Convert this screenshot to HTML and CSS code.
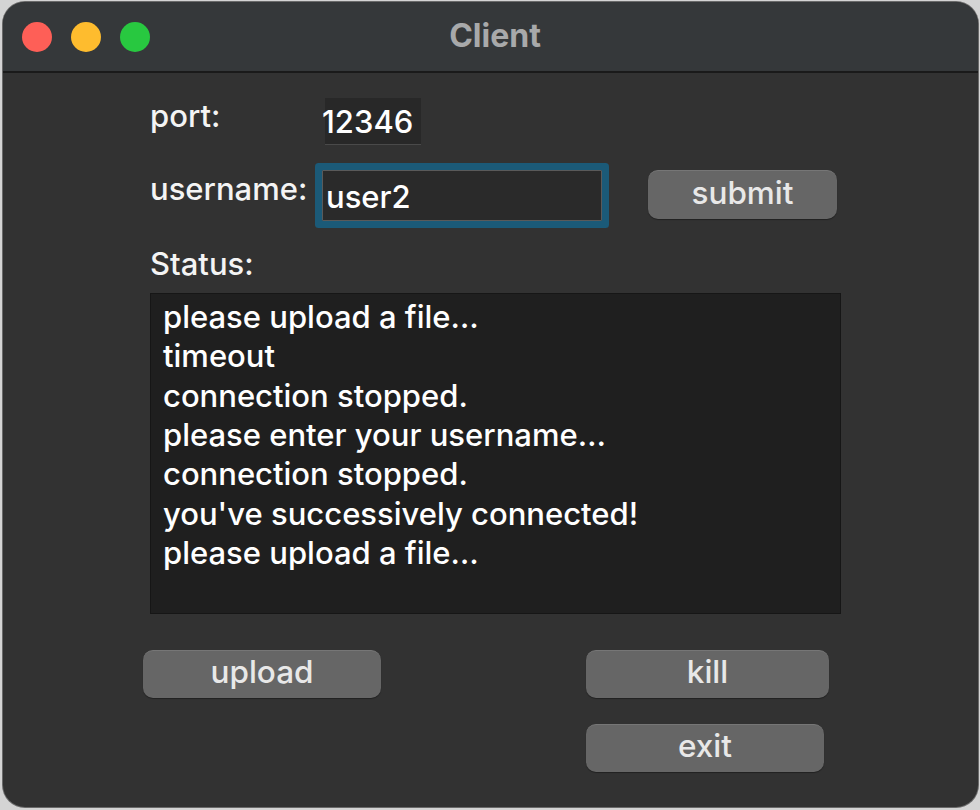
FILE: index.html
```html
<!DOCTYPE html>
<html>
<head>
<meta charset="utf-8">
<link rel="stylesheet" href="styles.css">
</head>
<body>
<div class="window">
  <div class="titlebar">
    <div class="lights">
      <span class="light red"></span>
      <span class="light yellow"></span>
      <span class="light green"></span>
    </div>
    <div class="title">Client</div>
    <div></div>
  </div>
  <div class="content">
    <div class="row row-port">
      <div class="label">port:</div>
      <div class="port-field">12346</div>
    </div>
    <div class="row row-user">
      <div class="label">username:</div>
      <div class="user-field">user2</div>
      <button class="btn btn-submit">submit</button>
    </div>
    <div class="label status-label">Status:</div>
    <div class="status-box">
      <div>please upload a file…</div>
      <div>timeout</div>
      <div>connection stopped.</div>
      <div>please enter your username…</div>
      <div>connection stopped.</div>
      <div>you've successively connected!</div>
      <div>please upload a file…</div>
    </div>
    <div class="row row-actions">
      <button class="btn btn-upload">upload</button>
      <button class="btn btn-kill">kill</button>
    </div>
    <div class="row row-exit">
      <button class="btn btn-exit">exit</button>
    </div>
  </div>
</div>
</body>
</html>
```

FILE: styles.css
```css
html, body {
  margin: 0;
  padding: 0;
}
body {
  width: 980px;
  height: 810px;
  overflow: hidden;
  background: #d4d4d4;
  font-family: Inter, "Liberation Sans", sans-serif;
  color: #f2f2f2;
}
.window {
  margin: 2px 0 0 3px;
  width: 975px;
  height: 805px;
  border-radius: 22px;
  background: #323232;
  box-shadow: 0 0 0 1px #6a6a6a;
  overflow: hidden;
  display: flex;
  flex-direction: column;
}
.titlebar {
  height: 69px;
  flex: none;
  background: #35383a;
  border-bottom: 2px solid #1a1a1a;
  display: grid;
  grid-template-columns: 1fr auto 1fr;
  align-items: center;
}
.lights {
  display: flex;
  gap: 19px;
  padding-left: 19px;
  margin-top: 1px;
}
.light {
  width: 30px;
  height: 30px;
  border-radius: 50%;
  display: block;
}
.red { background: #fe5f57; }
.yellow { background: #febc2e; }
.green { background: #28c840; }
.title {
  font-weight: 700;
  font-size: 32px;
  color: #a8a9aa;
  padding-left: 9px;
  margin-top: -3px;
}
.content {
  padding: 25px 0 0 147px;
  display: flex;
  flex-direction: column;
}
.row {
  display: flex;
}
.label {
  font-size: 31px;
  font-weight: 500;
  color: #f4f4f4;
}
.row-port {
  align-items: flex-start;
  height: 47px;
}
.row-port .label {
  width: 175px;
  margin-top: -1px;
}
.port-field {
  width: 96px;
  height: 46px;
  background: #282828;
  border-bottom: 1px solid #4a4a4a;
  font-size: 31px;
  font-weight: 500;
  line-height: 48px;
  text-indent: -3px;
  color: #ffffff;
}
.row-user {
  margin-top: 25px;
  align-items: flex-start;
}
.row-user .label {
  width: 172px;
  margin-top: 0px;
}
.user-field {
  width: 275px;
  height: 49px;
  background: #2a2a2a;
  border: 1px solid #5a5a5a;
  border-radius: 1px;
  box-shadow: 0 0 0 7px #1b5a78;
  font-size: 31px;
  font-weight: 500;
  line-height: 52px;
  padding-left: 3px;
  box-sizing: content-box;
  color: #ffffff;
}
.btn {
  font-family: Inter, "Liberation Sans", sans-serif;
  font-size: 31.5px;
  font-weight: 500;
  color: #e8e8e8;
  background: #666666;
  border: none;
  border-top: 1px solid #767676;
  border-radius: 10px;
  box-shadow: 0 1px 1px rgba(0,0,0,0.35);
  padding: 0 0 5px;
  height: 48px;
  line-height: 40px;
}
.btn-submit {
  width: 189px;
  margin-left: 46px;
  height: 49px;
}
.status-label {
  margin-top: 25px;
  line-height: 36px;
}
.status-box {
  margin-top: 11px;
  margin-left: 0;
  width: 677px;
  height: 316px;
  background: #1f1f1f;
  border: 1px solid #161616;
  padding: 3px 0 0 12px;
  font-size: 31px;
  font-weight: 500;
  line-height: 39.33px;
  color: #ffffff;
}
.row-actions {
  margin-top: 36px;
}
.btn-upload {
  width: 238px;
  margin-left: -7px;
}
.btn-kill {
  width: 243px;
  margin-left: 205px;
}
.row-exit {
  margin-top: 26px;
}
.btn-exit {
  width: 238px;
  margin-left: 436px;
}
```
